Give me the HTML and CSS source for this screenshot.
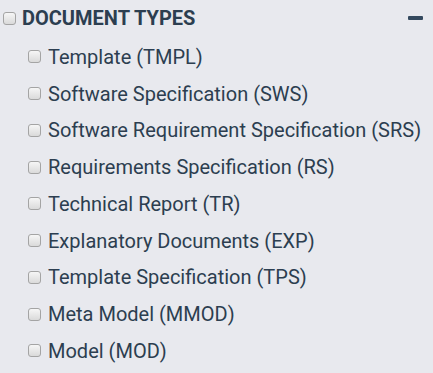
FILE: index.html
```html
<!DOCTYPE html>
<html lang="en">

<head>
  <meta charset="UTF-8">
  <meta name="viewport" content="width=device-width, initial-scale=1.0">
  <title>Document Types</title>
  <link rel="stylesheet" href="styles.css">
</head>

<body>
  <div class="filter">
    <header>
      <label class="group">
        <input type="checkbox">
        <span>DOCUMENT TYPES</span>
      </label>
      <button class="toggle" aria-label="Collapse"></button>
    </header>

    <ul class="types">
      <li><label><input type="checkbox"><span>Template (TMPL)</span></label></li>
      <li><label><input type="checkbox"><span>Software Specification (SWS)</span></label></li>
      <li><label><input type="checkbox"><span>Software Requirement Specification (SRS)</span></label></li>
      <li><label><input type="checkbox"><span>Requirements Specification (RS)</span></label></li>
      <li><label><input type="checkbox"><span>Technical Report (TR)</span></label></li>
      <li><label><input type="checkbox"><span>Explanatory Documents (EXP)</span></label></li>
      <li><label><input type="checkbox"><span>Template Specification (TPS)</span></label></li>
      <li><label><input type="checkbox"><span>Meta Model (MMOD)</span></label></li>
      <li><label><input type="checkbox"><span>Model (MOD)</span></label></li>
    </ul>
  </div>
</body>

</html>
```

FILE: styles.css
```css
* {
  margin: 0;
  padding: 0;
  box-sizing: border-box;
  font-family: Roboto, "Liberation Sans", sans-serif;
}

body {
  background-color: #e8e9ee;
  color: #2c3e50;
}

.filter {
  padding: 6px 10px 0 3px;
}

.filter header {
  display: flex;
  align-items: center;
  justify-content: space-between;
  height: 24px;
}

label {
  display: flex;
  align-items: center;
  cursor: pointer;
}

input[type="checkbox"] {
  appearance: none;
  width: 13px;
  height: 13px;
  border: 1px solid #a4a4a4;
  border-radius: 3px;
  background: linear-gradient(#f6f6f6, #dadada);
  cursor: pointer;
}

.group span {
  margin-left: 6px;
  font-size: 20px;
  line-height: 24px;
  font-weight: 700;
  color: #2c3e50;
}

.toggle {
  width: 15px;
  height: 4px;
  border: none;
  border-radius: 1px;
  background-color: #34495e;
}

.types {
  list-style: none;
  padding-left: 25px;
  margin-top: 8.5px;
}

.types li {
  height: 36.75px;
  display: flex;
  align-items: center;
}

.types span {
  margin-left: 7px;
  font-size: 20px;
  line-height: 24px;
}
```
